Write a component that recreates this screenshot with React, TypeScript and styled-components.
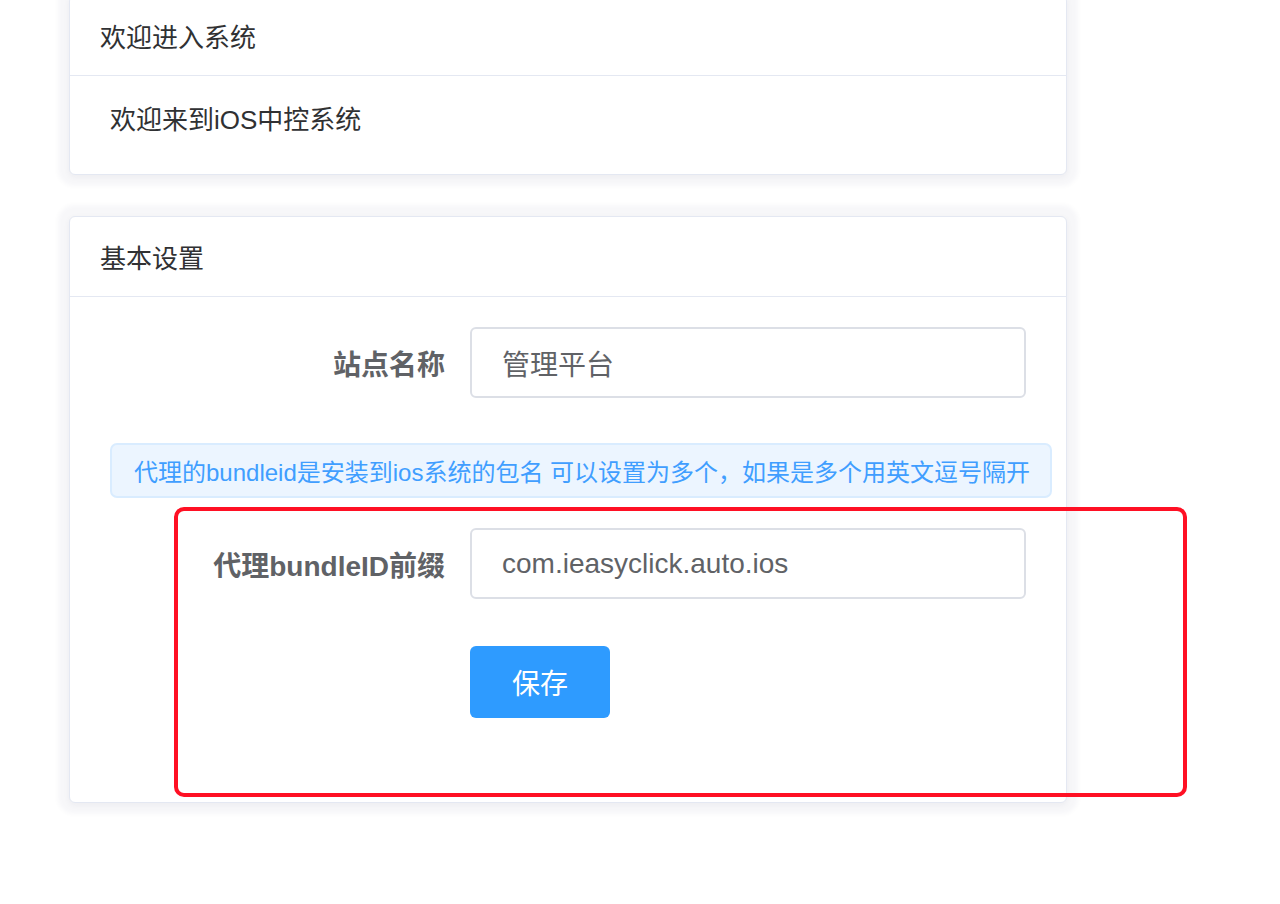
import React from "react";
import styled, { createGlobalStyle } from "styled-components";

const Global = createGlobalStyle`
  html, body { margin: 0; padding: 0; background: #ffffff; }
  body {
    font-family: "Liberation Sans", "Noto Sans CJK SC", Arial, sans-serif;
    color: #303133;
  }
  * { box-sizing: border-box; }
`;

const Page = styled.div`
  position: relative;
  width: 1280px;
  height: 904px;
  overflow: hidden;
  padding-left: 69px;
`;

const Card = styled.div<{ $offset?: number }>`
  width: 998px;
  margin-top: ${(p) => p.$offset ?? 0}px;
  background: #ffffff;
  border: 1px solid #e4e8f2;
  border-radius: 6px;
  box-shadow: 0 0 5px 11px rgba(40, 40, 80, 0.035), 0 2px 6px rgba(40, 40, 80, 0.05);
  overflow: hidden;
`;

const CardHeader = styled.div`
  height: 80px;
  display: flex;
  align-items: center;
  padding: 0 30px;
  border-bottom: 1px solid #e4e8f2;
  font-size: 26px;
  color: #303133;
`;

const CardBody = styled.div<{ $pad: string }>`
  padding: ${(p) => p.$pad};
`;

const WelcomeText = styled.div`
  font-size: 26px;
  line-height: 32px;
  color: #303133;
`;

const FormRow = styled.div<{ $mb: number }>`
  display: flex;
  align-items: center;
  margin-bottom: ${(p) => p.$mb}px;
`;

const Label = styled.label`
  width: 360px;
  padding-right: 25px;
  text-align: right;
  font-size: 28px;
  font-weight: bold;
  color: #606266;
`;

const Input = styled.input<{ $h: number }>`
  width: 556px;
  height: ${(p) => p.$h}px;
  border: 2px solid #dcdfe6;
  border-radius: 6px;
  padding: 0 30px;
  font-family: "Liberation Sans", "Noto Sans CJK SC", Arial, sans-serif;
  font-size: 28px;
  color: #606266;
  outline: none;
  background: #fff;
`;

const Alert = styled.div`
  width: 942px;
  height: 55px;
  display: flex;
  align-items: center;
  padding: 0 22px;
  margin-bottom: 30px;
  background: #ecf5ff;
  border: 2px solid #d9ecff;
  border-radius: 7px;
  font-size: 24px;
  color: #409eff;
  white-space: nowrap;
`;

const Button = styled.button`
  width: 140px;
  height: 72px;
  margin-left: 360px;
  border: none;
  border-radius: 6px;
  background: #2e9bff;
  color: #ffffff;
  font-family: "Liberation Sans", "Noto Sans CJK SC", Arial, sans-serif;
  font-size: 28px;
  cursor: pointer;
`;

const Highlight = styled.div`
  position: absolute;
  left: 174px;
  top: 507px;
  width: 1013px;
  height: 290px;
  border: 4px solid #ff1024;
  border-radius: 10px;
  pointer-events: none;
`;

export default function App() {
  return (
    <>
      <Global />
      <Page>
        <Card $offset={-5}>
          <CardHeader>欢迎进入系统</CardHeader>
          <CardBody $pad="28px 40px 38px">
            <WelcomeText>欢迎来到iOS中控系统</WelcomeText>
          </CardBody>
        </Card>
        <Card $offset={41}>
          <CardHeader>基本设置</CardHeader>
          <CardBody $pad="30px 40px 84px">
            <FormRow $mb={45}>
              <Label>站点名称</Label>
              <Input $h={71} defaultValue="管理平台" />
            </FormRow>
            <Alert>代理的bundleid是安装到ios系统的包名 可以设置为多个，如果是多个用英文逗号隔开</Alert>
            <FormRow $mb={47}>
              <Label>代理bundleID前缀</Label>
              <Input $h={71} defaultValue="com.ieasyclick.auto.ios" />
            </FormRow>
            <Button>保存</Button>
          </CardBody>
        </Card>
        <Highlight />
      </Page>
    </>
  );
}
